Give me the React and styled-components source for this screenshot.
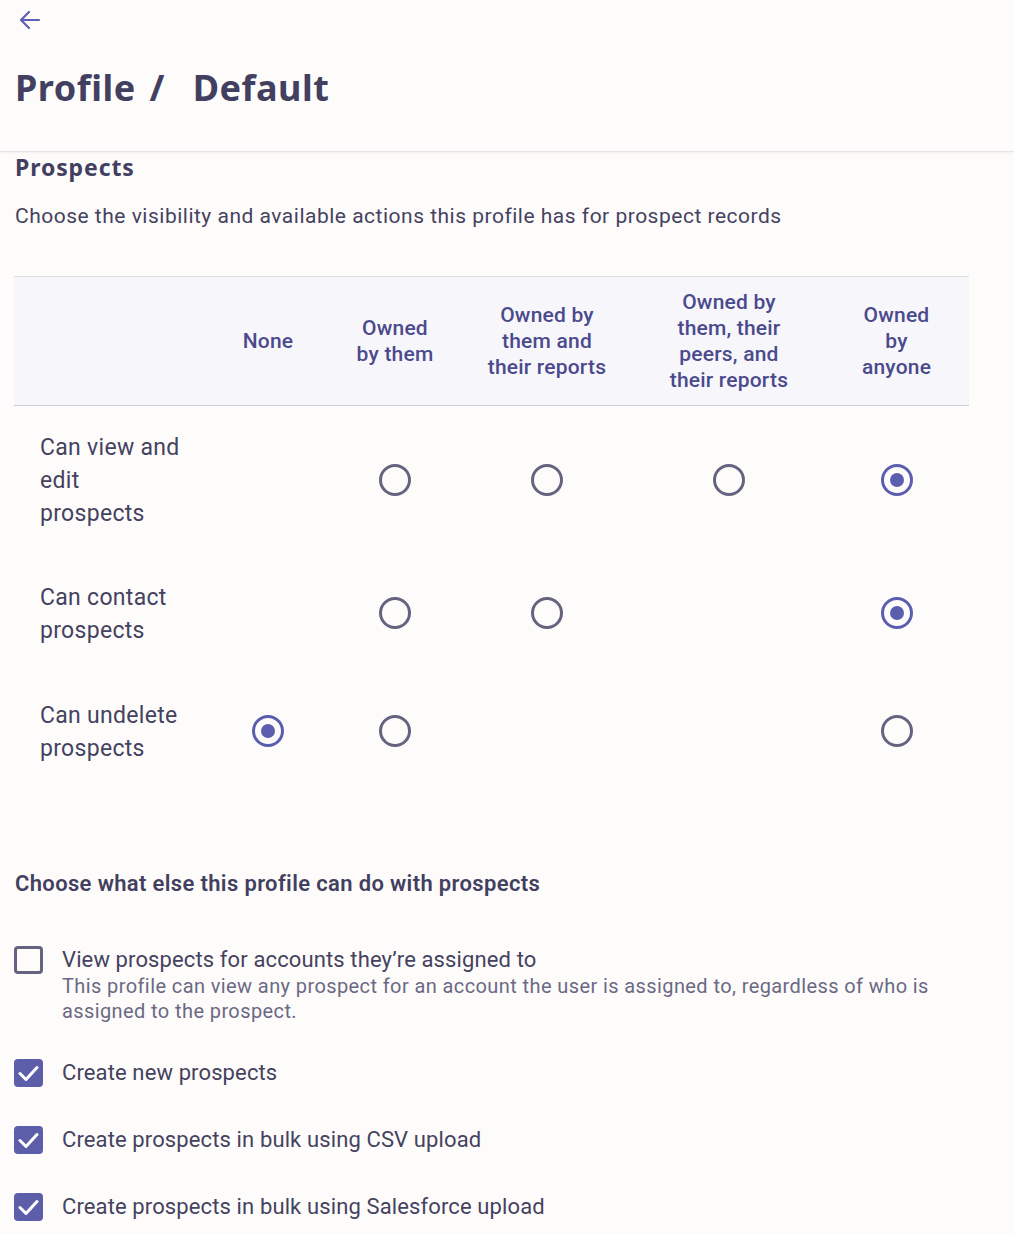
import React from 'react'
import styled, { createGlobalStyle } from 'styled-components'

const GlobalStyle = createGlobalStyle`
  html, body {
    margin: 0;
    padding: 0;
    background: #fdfcfb;
  }
  body {
    font-family: Roboto, "Liberation Sans", Arial, sans-serif;
    color: #45425f;
  }
`

const Page = styled.div`
  width: 1014px;
  min-height: 1234px;
  background: #fdfcfb;
  position: relative;
  overflow: hidden;
`

const Header = styled.header`
  height: 152px;
  box-sizing: border-box;
  padding: 7px 15px 0;
  border-bottom: 1px solid #e4e3ea;
  box-shadow: 0 1px 3px rgba(0, 0, 0, 0.05);
`

const BackButton = styled.button`
  display: flex;
  align-items: center;
  padding: 0;
  margin: 0 0 0 2px;
  border: none;
  background: transparent;
  color: #5c5fb2;
  height: 26px;
  cursor: pointer;
`

const Title = styled.h1`
  margin: 33px 0 0;
  font-family: "Noto Sans", Lato, sans-serif;
  font-weight: 700;
  font-size: 36px;
  line-height: 44px;
  color: #433f60;
  letter-spacing: 0.5px;
  word-spacing: 4px;
`

const Content = styled.main`
  padding: 0 15px;
`

const SectionTitle = styled.h2`
  margin: 0;
  padding-top: 2px;
  font-family: "Noto Sans", Lato, sans-serif;
  font-weight: 700;
  font-size: 23px;
  line-height: 26px;
  letter-spacing: 0.9px;
  color: #433f60;
`

const Description = styled.p`
  margin: 22px 0 0;
  font-size: 21px;
  line-height: 28px;
  letter-spacing: 0.5px;
  color: #45425f;
`

const Grid = styled.div`
  display: grid;
  grid-template-columns: 190px 126px 128px 176px 188px 147px;
  width: 955px;
  margin: 46px 0 0 -1px;
`

const HeadCell = styled.div`
  box-sizing: border-box;
  background: #f7f7fb;
  border-top: 1px solid #dedde3;
  border-bottom: 1px solid #cfced6;
  height: 130px;
  display: flex;
  align-items: center;
  justify-content: center;
  text-align: center;
  font-family: Roboto, sans-serif;
  font-weight: 500;
  font-size: 21px;
  line-height: 26px;
  letter-spacing: 0.2px;
  color: #4b4a8c;
  > div {
    transform: translateX(1px);
  }
`

const RowLabel = styled.div`
  padding: ${p => p.$pad || '25px'} 0 ${p => p.$pad || '25px'} 26px;
  font-size: 23px;
  line-height: 33px;
  letter-spacing: 0.3px;
  color: #45425f;
  display: flex;
  align-items: center;
`

const Cell = styled.div`
  display: flex;
  align-items: center;
  justify-content: center;
  padding-left: 2px;
  padding-bottom: 2px;
`

const Radio = styled.span`
  box-sizing: border-box;
  width: 32px;
  height: 32px;
  border-radius: 50%;
  border: 3px solid ${p => (p.$checked ? '#5b5eae' : '#65637f')};
  display: flex;
  align-items: center;
  justify-content: center;
  &::after {
    content: '';
    display: ${p => (p.$checked ? 'block' : 'none')};
    width: 14px;
    height: 14px;
    border-radius: 50%;
    background: #5b5eae;
  }
`

const SubTitle = styled.h3`
  margin: 80px 0 0;
  font-family: Roboto, sans-serif;
  font-weight: 600;
  font-size: 22px;
  line-height: 26px;
  letter-spacing: 0.35px;
  color: #433f60;
`

const OptionList = styled.div`
  display: flex;
  flex-direction: column;
  margin-top: 46px;
`

const Option = styled.label`
  display: flex;
  align-items: flex-start;
  gap: 19px;
  margin-bottom: ${p => p.$gap || '34px'};
`

const Box = styled.span`
  box-sizing: border-box;
  flex: none;
  width: 29px;
  height: 28px;
  margin-top: 3px;
  margin-left: -1px;
  border-radius: 4px;
  border: ${p => (p.$checked ? 'none' : '3px solid #65637f')};
  background: ${p => (p.$checked ? '#5d5eaa' : 'transparent')};
  display: flex;
  align-items: center;
  justify-content: center;
`

const OptionText = styled.div`
  display: flex;
  flex-direction: column;
`

const OptionLabel = styled.span`
  font-size: 22px;
  line-height: 33px;
  letter-spacing: 0.12px;
  color: #45425f;
`

const OptionHelp = styled.span`
  margin-top: -2px;
  font-size: 20px;
  line-height: 25px;
  letter-spacing: 0.4px;
  color: #6b6983;
  max-width: 890px;
`

const BottomFade = styled.div`
  position: absolute;
  left: 0;
  right: 0;
  bottom: 0;
  height: 6px;
  background: linear-gradient(to bottom, rgba(240, 239, 242, 0), #efeef2);
`

const columns = [
  ['None'],
  ['Owned', 'by them'],
  ['Owned by', 'them and', 'their reports'],
  ['Owned by', 'them, their', 'peers, and', 'their reports'],
  ['Owned', 'by', 'anyone'],
]

// null = option not available for that level
const rows = [
  { label: ['Can view and', 'edit', 'prospects'], values: [null, false, false, false, true] },
  { label: ['Can contact', 'prospects'], values: [null, false, false, null, true], pad: '26px' },
  { label: ['Can undelete', 'prospects'], values: [true, false, null, null, false], pad: '26px' },
]

const options = [
  {
    label: 'View prospects for accounts they’re assigned to',
    help: 'This profile can view any prospect for an account the user is assigned to, regardless of who is assigned to the prospect.',
    checked: false,
    gap: '32px',
  },
  { label: 'Create new prospects', checked: true },
  { label: 'Create prospects in bulk using CSV upload', checked: true },
  { label: 'Create prospects in bulk using Salesforce upload', checked: true },
]

const Lines = ({ lines }) =>
  lines.map((l, i) => (
    <React.Fragment key={i}>
      {l}
      {i < lines.length - 1 && <br />}
    </React.Fragment>
  ))

const Check = () => (
  <svg width="21" height="17" viewBox="0 0 21 17" fill="none">
    <path d="M2 8.5 L8 14.5 L19 2.5" stroke="#fff" strokeWidth="3" strokeLinecap="round" strokeLinejoin="round" />
  </svg>
)

export default function App() {
  return (
    <Page>
      <GlobalStyle />
      <Header>
        <BackButton aria-label="Back">
          <svg width="26" height="26" viewBox="0 0 26 26" fill="none">
            <path d="M22 13 H4 M12 5 L4 13 L12 21" stroke="currentColor" strokeWidth="2.2" strokeLinecap="round" strokeLinejoin="round" />
          </svg>
        </BackButton>
        <Title>Profile /&nbsp; Default</Title>
      </Header>

      <Content>
        <SectionTitle>Prospects</SectionTitle>
        <Description>Choose the visibility and available actions this profile has for prospect records</Description>

        <Grid>
          <HeadCell />
          {columns.map((c, i) => (
            <HeadCell key={i}>
              <div>
                <Lines lines={c} />
              </div>
            </HeadCell>
          ))}

          {rows.map((r, ri) => (
            <React.Fragment key={ri}>
              <RowLabel $pad={r.pad}>
                <div>
                  <Lines lines={r.label} />
                </div>
              </RowLabel>
              {r.values.map((v, vi) => (
                <Cell key={vi}>{v !== null && <Radio $checked={v} />}</Cell>
              ))}
            </React.Fragment>
          ))}
        </Grid>

        <SubTitle>Choose what else this profile can do with prospects</SubTitle>

        <OptionList>
          {options.map((o, i) => (
            <Option key={i} $gap={o.gap}>
              <Box $checked={o.checked}>{o.checked && <Check />}</Box>
              <OptionText>
                <OptionLabel>{o.label}</OptionLabel>
                {o.help && <OptionHelp>{o.help}</OptionHelp>}
              </OptionText>
            </Option>
          ))}
        </OptionList>
      </Content>
      <BottomFade />
    </Page>
  )
}
